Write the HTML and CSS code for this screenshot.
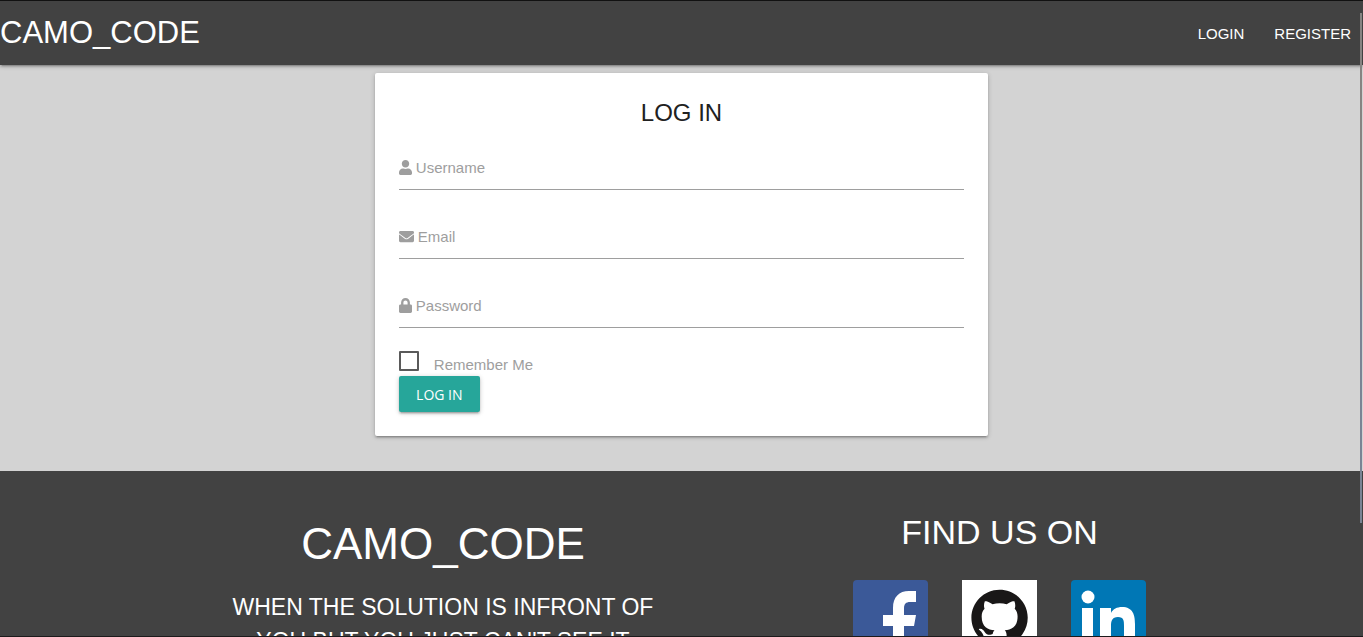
FILE: index.html
```html
<!DOCTYPE html>
<html lang="en">
<head>
<meta charset="utf-8">
<meta name="viewport" content="width=device-width, initial-scale=1">
<title>CAMO_CODE | Log in</title>
<link rel="stylesheet" href="styles.css">
</head>
<body>
<nav class="navbar">
  <a class="brand" href="#">CAMO_CODE</a>
  <ul class="nav-links">
    <li><a href="#">LOGIN</a></li>
    <li><a href="#">REGISTER</a></li>
  </ul>
</nav>

<main class="main">
  <form class="card">
    <h1 class="card-title">LOG IN</h1>
    <div class="field">
      <input id="username" type="text">
      <label for="username"><svg class="icon" viewBox="0 0 448 512"><path d="M224 256c70.7 0 128-57.300 128-128S294.700 0 224 0 96 57.300 96 128s57.300 128 128 128zm89.600 32h-16.700c-22.200 10.200-46.900 16-72.900 16s-50.600-5.800-72.900-16h-16.700C60.200 288 0 348.200 0 422.400V464c0 26.500 21.500 48 48 48h352c26.500 0 48-21.500 48-48v-41.600c0-74.200-60.200-134.400-134.400-134.400z"/></svg>Username</label>
    </div>
    <div class="field">
      <input id="email" type="email">
      <label for="email"><svg class="icon icon-wide" viewBox="0 0 512 512"><path d="M502.300 190.800c3.900-3.100 9.700-.2 9.700 4.700V400c0 26.500-21.500 48-48 48H48c-26.500 0-48-21.500-48-48V195.600c0-5 5.700-7.800 9.700-4.700 22.400 17.400 52.100 39.500 154.100 113.600 21.100 15.400 56.700 47.800 92.200 47.600 35.700.3 72-32.800 92.300-47.600 102-74.100 131.600-96.300 154-113.700zM256 320c23.200.4 56.600-29.200 73.400-41.400 132.700-96.300 142.800-104.700 173.400-128.700 5.800-4.500 9.200-11.500 9.200-18.900v-19c0-26.500-21.500-48-48-48H48c-26.500 0-48 21.500-48 48v19c0 7.400 3.400 14.300 9.200 18.900 30.600 23.900 40.700 32.400 173.400 128.700 16.800 12.200 50.200 41.800 73.400 41.400z"/></svg>Email</label>
    </div>
    <div class="field">
      <input id="password" type="password">
      <label for="password"><svg class="icon" viewBox="0 0 448 512"><path d="M400 224h-24v-72C376 68.200 307.800 0 224 0S72 68.200 72 152v72H48c-26.500 0-48 21.500-48 48v192c0 26.500 21.500 48 48 48h352c26.500 0 48-21.500 48-48V272c0-26.500-21.500-48-48-48zm-104 0H152v-72c0-39.700 32.300-72 72-72s72 32.300 72 72v72z"/></svg>Password</label>
    </div>
    <div class="remember">
      <input id="remember" type="checkbox">
      <label for="remember">Remember Me</label>
    </div>
    <button class="button" type="submit">LOG IN</button>
  </form>
</main>

<footer class="footer">
  <div class="footer-inner">
    <section class="about">
      <h2>CAMO_CODE</h2>
      <p>WHEN THE SOLUTION IS INFRONT OF YOU BUT YOU JUST CAN'T SEE IT</p>
    </section>
    <section class="social">
      <h3>FIND US ON</h3>
      <div class="social-links">
        <a href="#" aria-label="Facebook"><svg viewBox="0 0 75 75"><rect width="75" height="75" rx="4" fill="#3b5998"/><path fill="#fff" d="M40 75V46H30V35h10v-7c0-11 6-17 16-17h7v11h-6c-4 0-6 2-6 6v7h12l-2 11H51v29z"/></svg></a>
        <a href="#" aria-label="GitHub"><svg viewBox="0 0 75 75"><path fill="#fff" d="M0 0h75v75H0z"/><path fill="#191717" transform="translate(9.400 9.700) scale(3.520)" d="M8 0C3.580 0 0 3.580 0 8c0 3.540 2.290 6.530 5.470 7.590.4.070.55-.17.55-.38 0-.19-.01-.82-.01-1.490-2.010.37-2.530-.49-2.690-.94-.09-.23-.48-.94-.82-1.130-.28-.15-.68-.52-.01-.53.63-.01 1.080.58 1.230.82.72 1.210 1.870.87 2.330.66.07-.52.28-.87.51-1.070-1.780-.2-3.640-.89-3.640-3.950 0-.87.31-1.590.82-2.150-.08-.2-.36-1.020.08-2.120 0 0 .67-.21 2.200.82.64-.18 1.320-.27 2-.27s1.360.09 2 .27c1.530-1.040 2.200-.82 2.200-.82.44 1.100.16 1.920.08 2.120.51.56.82 1.270.82 2.150 0 3.070-1.870 3.750-3.650 3.950.29.25.54.73.54 1.480 0 1.070-.01 1.930-.01 2.200 0 .21.15.46.55.38A8.010 8.010 0 0 0 16 8c0-4.420-3.580-8-8-8z"/></svg></a>
        <a href="#" aria-label="LinkedIn"><svg viewBox="0 0 75 75"><rect width="75" height="75" rx="4" fill="#0077b5"/><g fill="#fff"><circle cx="17" cy="17" r="6.500"/><path d="M11 28h11v36H11zM29 28h11v5c2-4 6-6 11-6 11 0 13 8 13 17v20H53V46c0-5 0-9-6-9s-7 4-7 9v18H29z"/></g></svg></a>
      </div>
    </section>
  </div>
</footer>
<div class="scroll-thumb"></div>
</body>
</html>
```
FILE: styles.css
```css
* {
  box-sizing: border-box;
}

body {
  margin: 0;
  height: 100vh;
  overflow: hidden;
  border-top: 1px solid #111;
  border-bottom: 1px solid #1c1a1b;
  background: #d3d3d3;
  color: #212121;
  font-family: "Liberation Sans", Arial, sans-serif;
  font-size: 15px;
}

a {
  color: inherit;
  text-decoration: none;
}

h1, h2, h3, p {
  margin: 0;
  font-weight: 400;
}

.navbar {
  display: flex;
  align-items: center;
  justify-content: space-between;
  height: 64px;
  background: #424242;
  color: #fff;
  box-shadow: 0 2px 2px rgba(0, 0, 0, .14), 0 3px 1px -2px rgba(0, 0, 0, .12), 0 1px 5px rgba(0, 0, 0, .2);
}

.brand {
  font-size: 31px;
}

.nav-links {
  display: flex;
  gap: 30px;
  margin: 0;
  padding: 0 12px;
  list-style: none;
}

.main {
  padding: 8px 0 35px;
}

.card {
  width: 45%;
  margin: 0 auto;
  padding: 24px;
  border-radius: 2px;
  background: #fff;
  box-shadow: 0 2px 2px rgba(0, 0, 0, .14), 0 3px 1px -2px rgba(0, 0, 0, .12), 0 1px 5px rgba(0, 0, 0, .2);
}

.card-title {
  margin-bottom: 16px;
  font-size: 24px;
  line-height: 32px;
  text-align: center;
}

.field {
  display: grid;
  align-items: center;
  height: 45px;
  margin-bottom: 24px;
}

.field input,
.field label {
  grid-area: 1 / 1;
}

.field input {
  width: 100%;
  height: 45px;
  padding: 0;
  border: 0;
  border-bottom: 1px solid #9e9e9e;
  outline: 0;
  background: transparent;
  font: inherit;
}

.field label {
  display: flex;
  align-items: center;
  gap: 4px;
  justify-self: start;
  color: #9e9e9e;
}

.icon {
  width: 13px;
  height: 15px;
  fill: currentColor;
}

.icon-wide {
  width: 15px;
}

.remember {
  display: flex;
  align-items: center;
  gap: 15px;
  height: 24px;
  color: #9e9e9e;
}

.remember input {
  appearance: none;
  width: 20px;
  height: 20px;
  margin: 0 0 6px;
  border: 2px solid #5a5a5a;
  border-radius: 1px;
}

.button {
  display: block;
  min-width: 81px;
  height: 36px;
  padding: 0 16px;
  border: 0;
  border-radius: 2px;
  background: #26a69a;
  color: #fff;
  font: 14px "Open Sans", sans-serif;
  box-shadow: 0 2px 2px rgba(0, 0, 0, .14), 0 3px 1px -2px rgba(0, 0, 0, .12), 0 1px 5px rgba(0, 0, 0, .2);
}

.footer {
  background: #424242;
  color: #fff;
  text-align: center;
}

.footer-inner {
  display: grid;
  grid-template-columns: 50% 33.33%;
  column-gap: 16.67%;
  width: 70%;
  margin: 0 auto;
  padding-top: 41px;
}

.about {
  padding: 8px 12px 0;
}

.about h2 {
  font-size: 44px;
  line-height: 48px;
}

.about p {
  margin-top: 22px;
  font-size: 23px;
  line-height: 34px;
}

.social h3 {
  font-size: 34px;
  line-height: 40px;
}

.social-links {
  display: flex;
  justify-content: center;
  gap: 34px;
  margin-top: 28px;
}

.social-links a,
.social-links svg {
  display: block;
  width: 75px;
  height: 75px;
}

.scroll-thumb {
  position: fixed;
  top: 13px;
  right: 1px;
  width: 2px;
  height: 510px;
  background: linear-gradient(#868482 52%, #7a8494 56%);
}
```
